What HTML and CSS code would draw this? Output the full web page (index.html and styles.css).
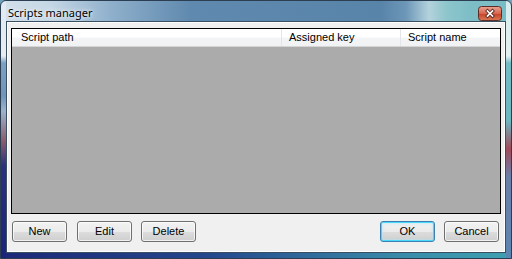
FILE: index.html
```html
<!DOCTYPE html>
<html>
<head>
<meta charset="utf-8">
<link rel="stylesheet" href="styles.css">
</head>
<body>
<div class="window">
  <div class="titlebar">
    <span class="title">Scripts manager</span>
    <span class="close">
      <svg width="24" height="15" viewBox="0 0 24 15">
        <defs>
          <linearGradient id="cg" x1="0" y1="0" x2="0" y2="1">
            <stop offset="0" stop-color="#e9a595"/>
            <stop offset="0.5" stop-color="#d8664e"/>
            <stop offset="0.55" stop-color="#c7452a"/>
            <stop offset="1" stop-color="#d97a55"/>
          </linearGradient>
        </defs>
        <rect x="0.5" y="0.5" width="23" height="14" rx="3" fill="url(#cg)" stroke="#5e2c24"/>
        <path d="M9.5 5 L14.5 10 M14.5 5 L9.5 10" stroke="#5a2a22" stroke-width="3.4" stroke-linecap="square"/>
        <path d="M9.5 5 L14.5 10 M14.5 5 L9.5 10" stroke="#ffffff" stroke-width="1.7" stroke-linecap="square"/>
      </svg>
    </span>
  </div>
  <div class="client">
    <div class="list">
      <div class="header">
        <div class="col c1">Script path</div>
        <div class="col c2">Assigned key</div>
        <div class="col c3">Script name</div>
      </div>
      <div class="listbody"></div>
    </div>
    <div class="buttons">
      <div class="group left">
        <button class="btn">New</button>
        <button class="btn">Edit</button>
        <button class="btn">Delete</button>
      </div>
      <div class="group right">
        <button class="btn default">OK</button>
        <button class="btn">Cancel</button>
      </div>
    </div>
  </div>
</div>
</body>
</html>
```

FILE: styles.css
```css
html, body {
  margin: 0;
  padding: 0;
  background: #6fa3bd;
}

.window {
  box-sizing: border-box;
  width: 512px;
  height: 259px;
  border: 1px solid #2c3f52;
  border-radius: 6px 6px 0 0;
  display: flex;
  flex-direction: column;
  background:
    linear-gradient(to bottom, #e1eaf2 0px, #e6edf3 55px, #7aa0c2 62px, #6f95ba 95px, #9cb4cc 110px, #8e5a6c 140px, #2a2f80 165px, #1b247a 259px) left top / 5px 100% no-repeat,
    linear-gradient(to bottom, #d7ecef 0px, #e2f1f2 55px, #74bcc4 62px, #6cb6c0 120px, #a04a5a 148px, #6b7fa8 175px, #5a86b2 259px) right top / 5px 100% no-repeat,
    linear-gradient(to right, #1c2878 0%, #24468c 40%, #3a8eaa 80%, #3fa0b0 100%) left bottom / 100% 7px no-repeat,
    linear-gradient(to right, #d3e0eb 0px, #c4d6e5 50px, #8fb0cc 110px, #5f89ae 190px, #5984aa 380px, #6d97b8 405px, #b4d2dc 428px, #8ec6cc 445px, #7dbdc6 470px, #79bcc5 512px);
}

.titlebar {
  height: 20px;
  display: flex;
  justify-content: space-between;
  align-items: flex-start;
  padding: 0 9px 0 7px;
}

.title {
  font-family: "Noto Sans", sans-serif;
  font-size: 11px;
  color: #000;
  line-height: 14px;
  margin-top: 5px;
  text-shadow: 0 0 6px rgba(255,255,255,0.9), 0 0 3px rgba(255,255,255,0.8);
}

.close {
  display: block;
  width: 24px;
  height: 15px;
  margin-top: 5px;
}

.close svg {
  display: block;
}

.client {
  box-sizing: border-box;
  margin: 0 5px 6px 5px;
  flex: 1;
  border: 1px solid #3b4f63;
  box-shadow: inset 0 0 0 1px #ffffff;
  background: #f0f0f0;
  display: flex;
  flex-direction: column;
  padding: 6px 4px 10px 4px;
}

.list {
  height: 186px;
  box-sizing: border-box;
  border: 1px solid #000;
  display: flex;
  flex-direction: column;
  background: #ababab;
}

.header {
  height: 18px;
  display: flex;
  background: linear-gradient(to bottom, #ffffff 0%, #ffffff 45%, #f3f4f6 55%, #f1f2f4 100%);
  border-bottom: 1px solid #d5d5d5;
  box-sizing: border-box;
  font-family: "Liberation Sans", Arial, sans-serif;
  font-size: 11px;
  color: #000;
}

.col {
  box-sizing: border-box;
  line-height: 17px;
  padding-left: 9px;
  border-right: 1px solid #e3e5e8;
  white-space: nowrap;
  overflow: hidden;
}

.c1 { width: 270px; }
.c2 { width: 119px; padding-left: 7px; }
.c3 { flex: 1; padding-left: 7px; border-right: none; }

.listbody {
  flex: 1;
}

.buttons {
  margin-top: 7px;
  display: flex;
  justify-content: space-between;
  padding: 0 2px 0 1px;
}

.group {
  display: flex;
  gap: 10px;
}

.group.right {
  gap: 9px;
}

.group.left .btn + .btn + .btn {
  margin-left: -1px;
}

.btn {
  box-sizing: border-box;
  width: 55px;
  height: 21px;
  padding: 0;
  margin: 0;
  border: 1px solid #707070;
  border-radius: 3px;
  background: linear-gradient(to bottom, #f2f2f2 0%, #ebebeb 50%, #dddddd 51%, #cfcfcf 100%);
  box-shadow: inset 0 0 0 1px rgba(255,255,255,0.7);
  font-family: "Liberation Sans", Arial, sans-serif;
  font-size: 11px;
  color: #000;
  line-height: 19px;
}

.btn.default {
  border-color: #3c7fb1;
  box-shadow: inset 0 0 0 1px #48d8fb, inset 0 0 2px 2px rgba(180,230,250,0.5);
}
```
